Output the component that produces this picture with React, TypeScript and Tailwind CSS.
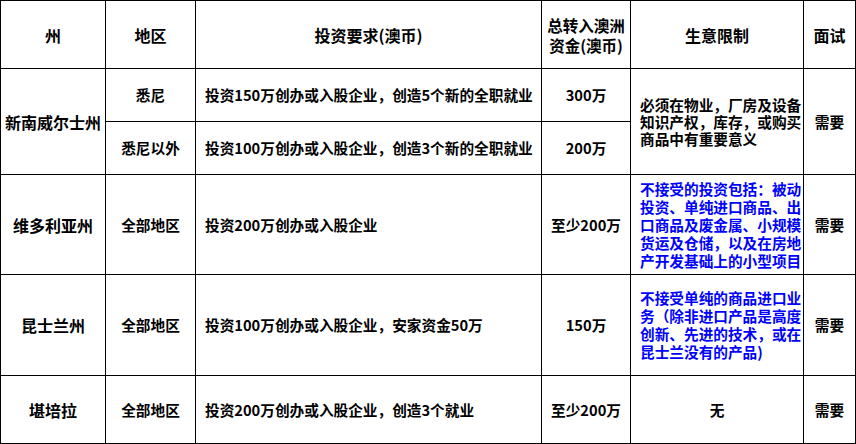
const cell = 'bg-white flex items-center justify-center text-center';

export default function App() {
  return (
    <div className="w-[856px] h-[444px] bg-white font-['Noto_Sans_CJK_SC',sans-serif] font-bold text-black">
      <div className="grid grid-cols-[104px_89px_345px_88px_172px_51px] grid-rows-[67px_52px_52px_99px_100px_67px] gap-px p-px bg-black">
        {/* header */}
        <div className={`${cell} text-[16px]`}>州</div>
        <div className={`${cell} text-[16px]`}>地区</div>
        <div className={`${cell} text-[16px]`}>投资要求(澳币)</div>
        <div className={`${cell} text-[15.5px] leading-[20px]`}>
          总转入澳洲
          <br />
          资金(澳币)
        </div>
        <div className={`${cell} text-[16px]`}>生意限制</div>
        <div className={`${cell} text-[16px]`}>面试</div>

        {/* 新南威尔士州 */}
        <div className={`${cell} row-span-2 text-[16px]`}>新南威尔士州</div>
        <div className={`${cell} text-[14.67px]`}>悉尼</div>
        <div className="bg-white flex items-center pl-[9px] text-[14.67px]">
          投资150万创办或入股企业，创造5个新的全职就业
        </div>
        <div className={`${cell} text-[14.67px]`}>300万</div>
        <div className="bg-white row-span-2 flex flex-col justify-center pl-[9px] text-[14.67px] leading-[17px]">
          <span>必须在物业，厂房及设备</span>
          <span>知识产权，库存，或购买</span>
          <span>商品中有重要意义</span>
        </div>
        <div className={`${cell} row-span-2 text-[14.67px]`}>需要</div>
        <div className={`${cell} text-[14.67px]`}>悉尼以外</div>
        <div className="bg-white flex items-center pl-[9px] text-[14.67px]">
          投资100万创办或入股企业，创造3个新的全职就业
        </div>
        <div className={`${cell} text-[14.67px]`}>200万</div>

        {/* 维多利亚州 */}
        <div className={`${cell} text-[16px]`}>维多利亚州</div>
        <div className={`${cell} text-[14.67px]`}>全部地区</div>
        <div className="bg-white flex items-center pl-[9px] text-[14.67px]">投资200万创办或入股企业</div>
        <div className={`${cell} text-[14.67px]`}>至少200万</div>
        <div className="bg-white flex flex-col justify-center pl-[9px] text-[14.67px] leading-[18px] text-[#0000ff]">
          <span>不接受的投资包括：被动</span>
          <span>投资、单纯进口商品、出</span>
          <span>口商品及废金属、小规模</span>
          <span>货运及仓储，以及在房地</span>
          <span>产开发基础上的小型项目</span>
        </div>
        <div className={`${cell} text-[14.67px]`}>需要</div>

        {/* 昆士兰州 */}
        <div className={`${cell} text-[16px]`}>昆士兰州</div>
        <div className={`${cell} text-[14.67px]`}>全部地区</div>
        <div className="bg-white flex items-center pl-[9px] text-[14.67px]">
          投资100万创办或入股企业，安家资金50万
        </div>
        <div className={`${cell} text-[14.67px]`}>150万</div>
        <div className="bg-white flex flex-col justify-center pl-[9px] text-[14.67px] leading-[18px] text-[#0000ff]">
          <span>不接受单纯的商品进口业</span>
          <span>务（除非进口产品是高度</span>
          <span>创新、先进的技术，或在</span>
          <span>昆士兰没有的产品)</span>
        </div>
        <div className={`${cell} text-[14.67px]`}>需要</div>

        {/* 堪培拉 */}
        <div className={`${cell} text-[16px]`}>堪培拉</div>
        <div className={`${cell} text-[14.67px]`}>全部地区</div>
        <div className="bg-white flex items-center pl-[9px] text-[14.67px]">
          投资200万创办或入股企业，创造3个就业
        </div>
        <div className={`${cell} text-[14.67px]`}>至少200万</div>
        <div className={`${cell} text-[14.67px]`}>无</div>
        <div className={`${cell} text-[14.67px]`}>需要</div>
      </div>
    </div>
  );
}
